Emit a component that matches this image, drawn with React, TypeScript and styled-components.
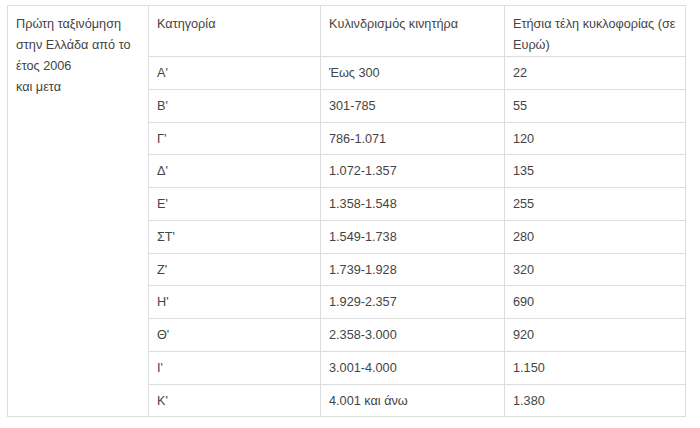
import React from 'react';
import styled, { createGlobalStyle } from 'styled-components';

const GlobalStyle = createGlobalStyle`
    html, body {
        margin: 0;
        padding: 0;
        background: #fff;
    }
    body {
        font-family: 'Liberation Sans', Arial, sans-serif;
        color: #444;
    }
`;

const Page = styled.div`
    padding: 5px 0 0 7px;
`;

const Table = styled.table`
    border-collapse: collapse;
    table-layout: fixed;
    width: 678px;
    font-size: 12.7px;
    line-height: 21px;
    border: 1px solid #ddd;
`;

const Col = styled.col<{ w: number }>`
    width: ${props => props.w}px;
`;

const GroupCell = styled.td`
    vertical-align: top;
    padding: 8px 8px 0;
    border: 1px solid #ddd;
`;

const HeadCell = styled.td`
    vertical-align: top;
    padding: 8px 8px 0;
    border: 1px solid #ddd;
`;

const Cell = styled.td`
    vertical-align: top;
    padding: 6px 8px 4.75px;
    border: 1px solid #ddd;
`;

const rows: [string, string, string][] = [
    ['Α\'', 'Έως 300', '22'],
    ['Β\'', '301-785', '55'],
    ['Γ\'', '786-1.071', '120'],
    ['Δ\'', '1.072-1.357', '135'],
    ['Ε\'', '1.358-1.548', '255'],
    ['ΣΤ\'', '1.549-1.738', '280'],
    ['Ζ\'', '1.739-1.928', '320'],
    ['Η\'', '1.929-2.357', '690'],
    ['Θ\'', '2.358-3.000', '920'],
    ['Ι\'', '3.001-4.000', '1.150'],
    ['Κ\'', '4.001 και άνω', '1.380'],
];

export default function App() {
    return (
        <Page>
            <GlobalStyle />
            <Table>
                <colgroup>
                    <Col w={141} />
                    <Col w={172} />
                    <Col w={184} />
                    <Col w={181} />
                </colgroup>
                <tbody>
                    <tr>
                        <GroupCell rowSpan={rows.length + 1}>
                            Πρώτη ταξινόμηση<br />
                            στην Ελλάδα από το<br />
                            έτος 2006<br />
                            και μετα
                        </GroupCell>
                        <HeadCell>Κατηγορία</HeadCell>
                        <HeadCell>Κυλινδρισμός κινητήρα</HeadCell>
                        <HeadCell>Ετήσια τέλη κυκλοφορίας (σε Ευρώ)</HeadCell>
                    </tr>
                    {rows.map(([cat, cc, fee]) => (
                        <tr key={cat}>
                            <Cell>{cat}</Cell>
                            <Cell>{cc}</Cell>
                            <Cell>{fee}</Cell>
                        </tr>
                    ))}
                </tbody>
            </Table>
        </Page>
    );
}
